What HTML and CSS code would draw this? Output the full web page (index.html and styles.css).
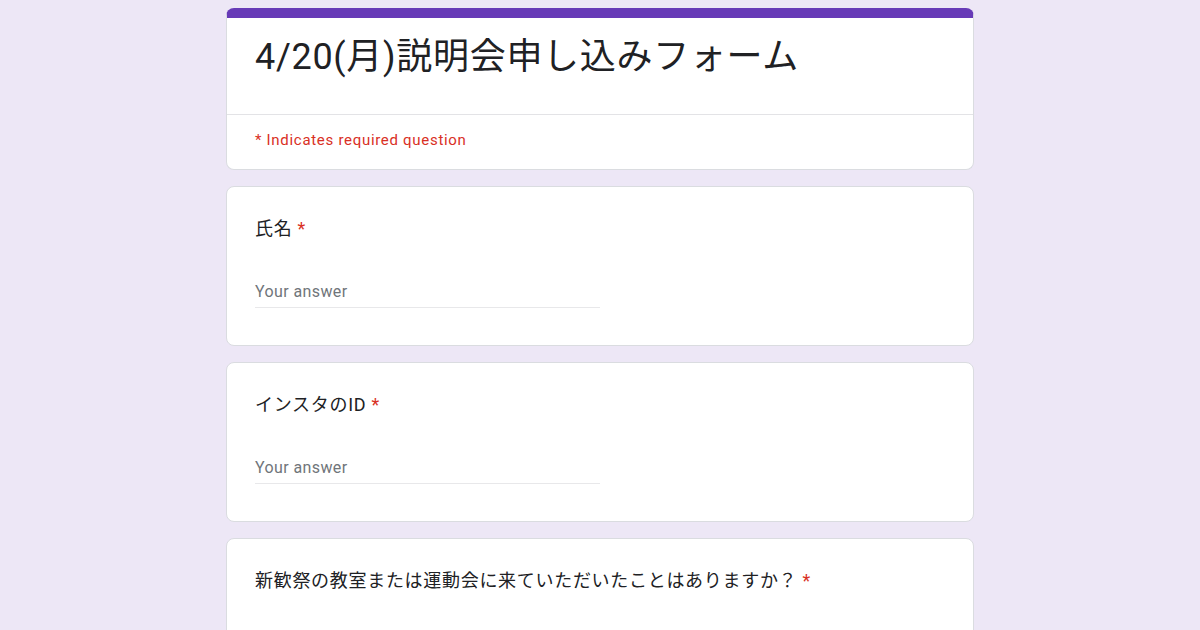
FILE: index.html
```html
<!DOCTYPE html>
<html lang="ja">
<head>
<meta charset="utf-8">
<title>4/20(月)説明会申し込みフォーム</title>
<link rel="stylesheet" href="styles.css">
</head>
<body>
<main class="form">
  <section class="card header-card">
    <div class="title-area">
      <h1 class="title">4/20(月)説明会申し込みフォーム</h1>
    </div>
    <div class="required-note">* Indicates required question</div>
  </section>

  <section class="card question">
    <div class="q-label">氏名 <span class="star">*</span></div>
    <div class="answer"><span class="placeholder">Your answer</span></div>
  </section>

  <section class="card question">
    <div class="q-label">インスタのID <span class="star">*</span></div>
    <div class="answer"><span class="placeholder">Your answer</span></div>
  </section>

  <section class="card question question-open">
    <div class="q-label">新歓祭の教室または運動会に来ていただいたことはありますか？ <span class="star">*</span></div>
  </section>
</main>
</body>
</html>
```

FILE: styles.css
```css
html, body {
  margin: 0;
  padding: 0;
}

body {
  background: #ede7f6;
  font-family: Roboto, "Noto Sans CJK JP", "Noto Sans", sans-serif;
  color: #202124;
  overflow: hidden;
}

.form {
  width: 748px;
  margin: 8px auto 0;
  display: flex;
  flex-direction: column;
  gap: 16px;
}

.card {
  background: #ffffff;
  border: 1px solid #dadce0;
  border-radius: 8px;
  box-sizing: border-box;
}

.header-card {
  border-top: 10px solid #673ab7;
  overflow: hidden;
}

.title-area {
  padding: 14px 28px 32px;
  border-bottom: 1px solid #e3e3e6;
}

.title {
  margin: 0;
  font-size: 36px;
  line-height: 50px;
  font-weight: 400;
  letter-spacing: 0.7px;
  color: #202124;
}

.required-note {
  padding: 15px 28px 19px;
  font-size: 15px;
  line-height: 20px;
  letter-spacing: 0.7px;
  color: #d93025;
}

.question {
  padding: 30px 28px 37px;
}

.question-open {
  padding-bottom: 120px;
}

.q-label {
  font-size: 18px;
  line-height: 24px;
  letter-spacing: 0.7px;
  color: #202124;
}

.star {
  color: #d93025;
}

.answer {
  width: 345px;
  margin-top: 39px;
  padding-bottom: 3px;
  border-bottom: 1px solid #e8e8ea;
  font-size: 16px;
  line-height: 24px;
  letter-spacing: 0.4px;
}

.placeholder {
  color: #70757a;
}
```
